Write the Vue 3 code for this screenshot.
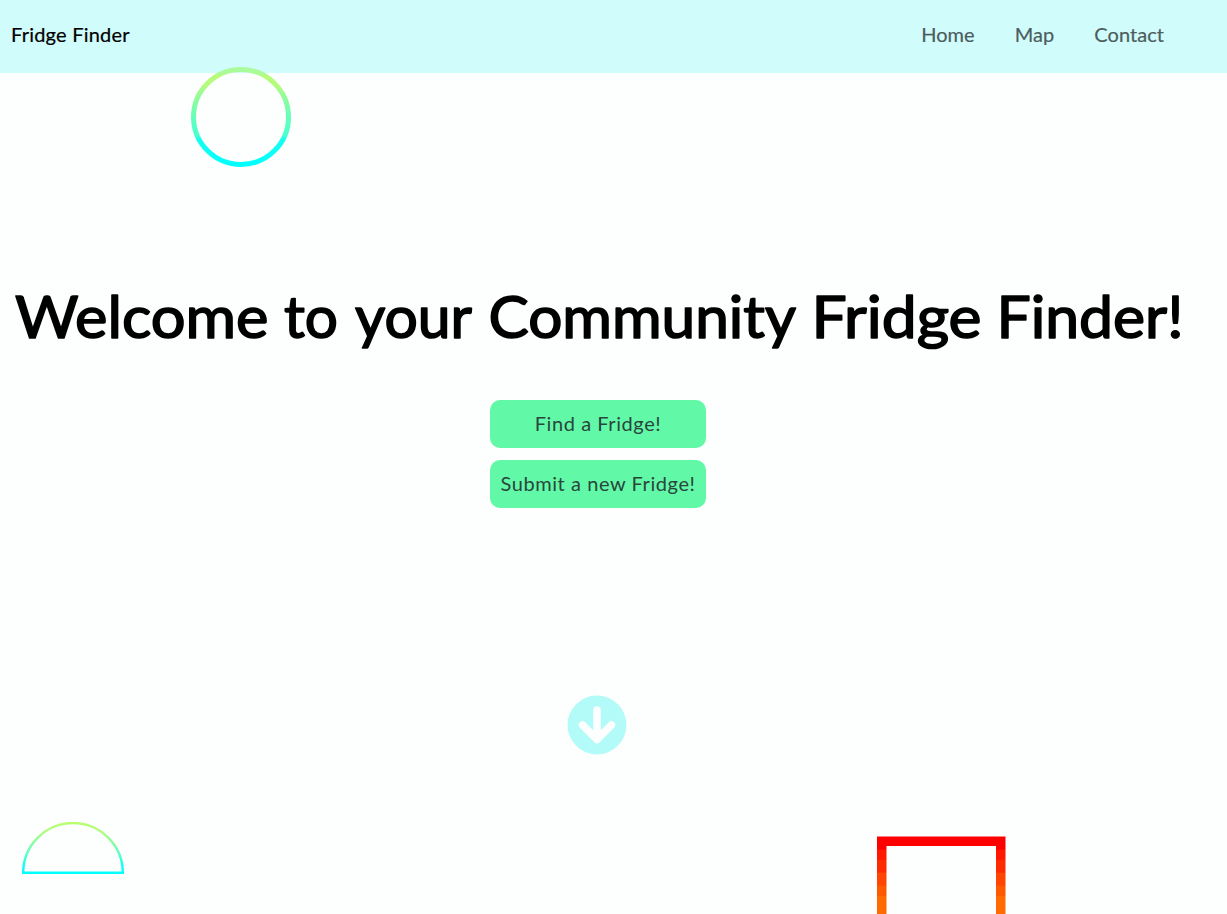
<script setup>
const links = [
  { label: 'Home', id: 'home' },
  { label: 'Map', id: 'map' },
  { label: 'Contact', id: 'contact' },
]
const title = [
  { text: 'Welcome', x: 15, width: 253.5 },
  { text: 'to', x: 284, width: 54 },
  { text: 'your', x: 355, width: 117 },
  { text: 'Community', x: 488.5, width: 307.5 },
  { text: 'Fridge', x: 811.5, width: 170 },
  { text: 'Finder!', x: 996.5, width: 187 },
]
</script>

<template>
  <div class="page">
    <header class="nav">
      <a class="brand">Fridge Finder</a>
      <nav class="links">
        <a v-for="link in links" :key="link.id" :class="link.id">{{ link.label }}</a>
      </nav>
    </header>

    <main class="hero">
      <h1 class="title">
        <svg width="1227" height="90" viewBox="0 0 1227 90">
          <text v-for="word in title" :key="word.text" :x="word.x" y="66.5" :textLength="word.width" lengthAdjust="spacingAndGlyphs">{{ word.text }}</text>
        </svg>
      </h1>
      <div class="actions">
        <button class="find"><span>Find a Fridge!</span></button>
        <button class="submit"><span>Submit a new Fridge!</span></button>
      </div>
      <svg class="down" width="60" height="60" viewBox="0 0 60 60">
        <circle cx="30" cy="30" r="29.5" fill="#b3fbf8" />
        <path d="M30 15V44M15.500 30L30 44.500L44.500 30" fill="none" stroke="#fdffff" stroke-width="7.500" stroke-linecap="round" stroke-linejoin="round" />
      </svg>
    </main>

    <svg class="shape ring" width="100" height="100" viewBox="0 0 100 100">
      <defs>
        <linearGradient id="lime" x1="0" y1="0" x2="0" y2="1">
          <stop offset="0" stop-color="#a9fb9b" />
          <stop offset=".05" stop-color="#acfb96" />
          <stop offset=".06" stop-color="#b9fb79" />
          <stop offset=".18" stop-color="#b3fb7d" />
          <stop offset=".23" stop-color="#a0fb91" />
          <stop offset=".5" stop-color="#65ffb9" />
          <stop offset=".7" stop-color="#48ffd0" />
          <stop offset=".73" stop-color="#16fff0" />
          <stop offset="1" stop-color="#00ffff" />
        </linearGradient>
      </defs>
      <circle cx="50" cy="50" r="47.500" fill="none" stroke="url(#lime)" stroke-width="5" />
    </svg>
    <svg class="shape dome" width="102" height="52" viewBox="0 0 102 52">
      <defs>
        <linearGradient id="arc" x1="0" y1="0" x2="0" y2="1">
          <stop offset="0" stop-color="#b7ff70" />
          <stop offset=".2" stop-color="#b0fb84" />
          <stop offset=".6" stop-color="#60ffc0" />
          <stop offset=".85" stop-color="#10fff5" />
          <stop offset="1" stop-color="#00ffff" />
        </linearGradient>
      </defs>
      <path d="M1.200 50.800A49.800 49.800 0 0 1 100.800 50.800Z" fill="none" stroke="url(#arc)" stroke-width="2.400" />
    </svg>
    <svg class="shape frame" width="129" height="129" viewBox="0 0 129 129">
      <defs>
        <linearGradient id="ember" x1="0" y1="0" x2="0" y2="129" gradientUnits="userSpaceOnUse">
          <stop offset=".1" stop-color="#ff0000" />
          <stop offset=".11" stop-color="#ff1700" />
          <stop offset=".18" stop-color="#ff1700" />
          <stop offset=".19" stop-color="#ff2b00" />
          <stop offset=".28" stop-color="#ff2b00" />
          <stop offset=".29" stop-color="#ff4500" />
          <stop offset=".38" stop-color="#ff4500" />
          <stop offset=".39" stop-color="#ff5900" />
          <stop offset=".46" stop-color="#ff5900" />
          <stop offset=".47" stop-color="#ff6b00" />
        </linearGradient>
      </defs>
      <rect x="4.750" y="5.250" width="119" height="119" fill="none" stroke="url(#ember)" stroke-width="9.500" />
    </svg>
  </div>
</template>

<style>
body {
  background: #fdfffe;
}
</style>

<style scoped>
.page {
  position: relative;
  height: 914px;
  overflow: hidden;
  background: #fdfffe;
  font-family: Lato, "Liberation Sans", sans-serif;
}
.nav {
  display: flex;
  align-items: center;
  justify-content: space-between;
  box-sizing: border-box;
  height: 73px;
  padding: 0 63px 5px 11px;
  background: #d0fcfc;
  font-size: 20px;
  line-height: 26px;
}
.brand {
  color: #000;
  letter-spacing: .22px;
  -webkit-text-stroke: .2px #000;
}
.links {
  display: flex;
  gap: 40px;
  color: #4d5d5d;
  letter-spacing: .05px;
  -webkit-text-stroke: .2px #4d5d5d;
}
.hero {
  display: flex;
  flex-direction: column;
  align-items: center;
}
.title {
  width: 1227px;
  height: 90px;
  margin: 198px 0 0;
}
.title svg {
  display: block;
}
.title text {
  font-size: 58px;
  font-weight: 400;
  fill: #000;
  stroke: #000;
  stroke-width: 1.6;
  stroke-linejoin: round;
}
.actions {
  display: flex;
  flex-direction: column;
  gap: 12px;
  margin: 39px 31px 0 0;
}
button {
  width: 216px;
  height: 48px;
  padding: 0 0 2px;
  border: 0;
  border-radius: 10px;
  background: #61f9a8;
  color: #29463b;
  font: 20px/26px Lato, "Liberation Sans", sans-serif;
  letter-spacing: .57px;
  white-space: nowrap;
}
.down {
  margin: 186.5px 33px 0 0;
}
.shape {
  position: absolute;
}
.ring {
  left: 191px;
  top: 67px;
}
.dome {
  left: 22px;
  top: 822px;
}
.frame {
  left: 877px;
  top: 836px;
}
</style>
